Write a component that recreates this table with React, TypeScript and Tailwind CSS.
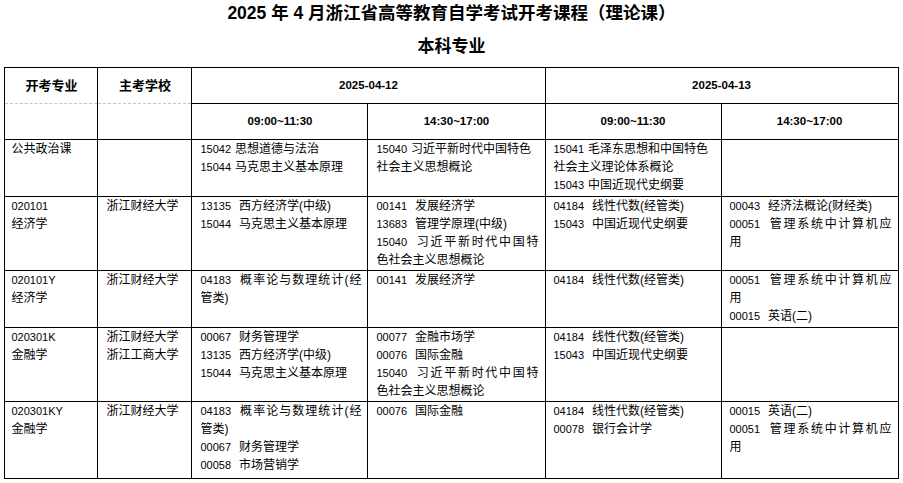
import React from "react"

type Line = { code?: string; text: string; justify?: boolean }
type Row = { major: string[]; school: string[]; cells: Line[][]; height: string; plain?: boolean }

const L = (code: string | undefined, text: string, justify = false): Line => ({ code, text, justify })

const ROWS: Row[] = [
  {
    major: ["公共政治课"],
    school: [],
    height: "h-[57px]",
    plain: true,
    cells: [
      [L("15042", "思想道德与法治"), L("15044", "马克思主义基本原理")],
      [L("15040", "习近平新时代中国特色"), L(undefined, "社会主义思想概论")],
      [L("15041", "毛泽东思想和中国特色"), L(undefined, "社会主义理论体系概论"), L("15043", "中国近现代史纲要")],
      [],
    ],
  },
  {
    major: ["020101", "经济学"],
    school: ["浙江财经大学"],
    height: "h-[74px]",
    cells: [
      [L("13135", "西方经济学(中级)"), L("15044", "马克思主义基本原理")],
      [L("00141", "发展经济学"), L("13683", "管理学原理(中级)"), L("15040", "习近平新时代中国特", true), L(undefined, "色社会主义思想概论")],
      [L("04184", "线性代数(经管类)"), L("15043", "中国近现代史纲要")],
      [L("00043", "经济法概论(财经类)"), L("00051", "管理系统中计算机应", true), L(undefined, "用")],
    ],
  },
  {
    major: ["020101Y", "经济学"],
    school: ["浙江财经大学"],
    height: "h-[57px]",
    cells: [
      [L("04183", "概率论与数理统计(经", true), L(undefined, "管类)")],
      [L("00141", "发展经济学")],
      [L("04184", "线性代数(经管类)")],
      [L("00051", "管理系统中计算机应", true), L(undefined, "用"), L("00015", "英语(二)")],
    ],
  },
  {
    major: ["020301K", "金融学"],
    school: ["浙江财经大学", "浙江工商大学"],
    height: "h-[74px]",
    cells: [
      [L("00067", "财务管理学"), L("13135", "西方经济学(中级)"), L("15044", "马克思主义基本原理")],
      [L("00077", "金融市场学"), L("00076", "国际金融"), L("15040", "习近平新时代中国特", true), L(undefined, "色社会主义思想概论")],
      [L("04184", "线性代数(经管类)"), L("15043", "中国近现代史纲要")],
      [],
    ],
  },
  {
    major: ["020301KY", "金融学"],
    school: ["浙江财经大学"],
    height: "h-[77px]",
    cells: [
      [L("04183", "概率论与数理统计(经", true), L(undefined, "管类)"), L("00067", "财务管理学"), L("00058", "市场营销学")],
      [L("00076", "国际金融")],
      [L("04184", "线性代数(经管类)"), L("00078", "银行会计学")],
      [L("00015", "英语(二)"), L("00051", "管理系统中计算机应", true), L(undefined, "用")],
    ],
  },
]

const cellFont = "font-['Liberation_Sans','Noto_Sans_CJK_SC',sans-serif]"

function CourseLine({ line, plain }: { line: Line; plain?: boolean }) {
  return (
    <div
      className={`whitespace-nowrap leading-[18px] text-[12px] ${
        line.justify ? "[text-align-last:justify]" : ""
      }`}
    >
      {line.code && (
        <span className={`text-[11px] ${plain ? "mr-[4px]" : "mr-[8px]"}`}>{line.code}</span>
      )}
      {line.text}
    </div>
  )
}

export default function App() {
  const td = "border border-black align-top pl-2 pr-[6px] pt-0 pb-0"
  return (
    <div className={`w-[903px] bg-white text-black pt-px ${cellFont}`}>
      <h1 className="text-center font-bold text-[17.5px] leading-[24px]">
        2025 年 4 月浙江省高等教育自学考试开考课程（理论课）
      </h1>
      <h2 className="mt-[10px] text-center font-bold text-[17px] leading-[24px]">本科专业</h2>
      <table className="mt-[8px] mx-auto w-[893px] table-fixed border-collapse">
        <colgroup>
          <col className="w-[93px]" />
          <col className="w-[94px]" />
          <col className="w-[176px]" />
          <col className="w-[177px]" />
          <col className="w-[176px]" />
          <col className="w-[177px]" />
        </colgroup>
        <thead>
          <tr className="h-[36px]">
            <th className="border border-black [border-bottom-style:dashed] [border-bottom-color:#c4c4c4] text-[13px] font-bold">
              开考专业
            </th>
            <th className="border border-black [border-bottom-style:dashed] [border-bottom-color:#c4c4c4] text-[13px] font-bold">
              主考学校
            </th>
            <th colSpan={2} className="border border-black text-[11.5px] font-bold">
              2025-04-12
            </th>
            <th colSpan={2} className="border border-black text-[11.5px] font-bold">
              2025-04-13
            </th>
          </tr>
          <tr className="h-[36px]">
            <th className="border border-black [border-top-style:dashed] [border-top-color:#c4c4c4]" />
            <th className="border border-black [border-top-style:dashed] [border-top-color:#c4c4c4]" />
            <th className="border border-black text-[11.5px] font-bold">09:00~11:30</th>
            <th className="border border-black text-[11.5px] font-bold">14:30~17:00</th>
            <th className="border border-black text-[11.5px] font-bold">09:00~11:30</th>
            <th className="border border-black text-[11.5px] font-bold">14:30~17:00</th>
          </tr>
        </thead>
        <tbody>
          {ROWS.map((row, i) => (
            <tr key={i} className={row.height}>
              <td className={`${td} !pl-[6px]`}>
                {row.major.map((m, j) => (
                  <div
                    key={j}
                    className={`leading-[18px] ${/^[0-9A-Z]+$/.test(m) ? "text-[11px]" : "text-[12px]"}`}
                  >
                    {m}
                  </div>
                ))}
              </td>
              <td className={td}>
                {row.school.map((s, j) => (
                  <div key={j} className="leading-[18px] text-[12px]">
                    {s}
                  </div>
                ))}
              </td>
              {row.cells.map((cell, j) => (
                <td key={j} className={td}>
                  {cell.map((line, k) => (
                    <CourseLine key={k} line={line} plain={row.plain} />
                  ))}
                </td>
              ))}
            </tr>
          ))}
        </tbody>
      </table>
    </div>
  )
}
